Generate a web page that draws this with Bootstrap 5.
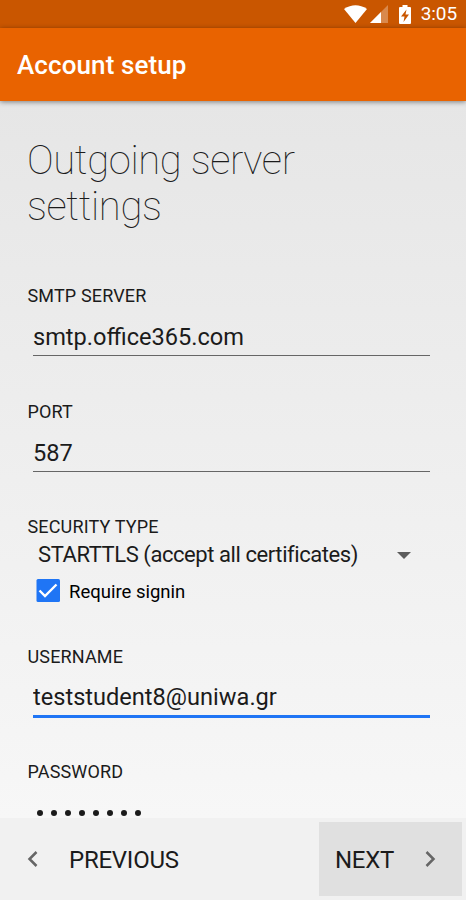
<!DOCTYPE html>
<html lang="en">
<head>
<meta charset="utf-8">
<meta name="viewport" content="width=device-width, initial-scale=1">
<title>Account setup</title>
<link href="https://cdn.jsdelivr.net/npm/bootstrap@5.3.0/dist/css/bootstrap.min.css" rel="stylesheet">
<style>
body{font-family:Roboto,sans-serif;color:#1b1b1b;height:900px;background:linear-gradient(#e6e6e6 100px,#f7f7f7 818px)}
.status-bar{height:28px;background:#c95600;padding-right:9px}
.status-time{font-size:19px;line-height:28px;margin-left:9px;letter-spacing:-.1px}
.app-bar{height:73px;background:#e96300;box-shadow:0 1px 5px rgba(0,0,0,.45);padding-left:17px}
.app-title{font-size:26px;font-weight:500;line-height:75px;letter-spacing:.1px}
.setup-form{padding:37px 36px 0 27px}
.page-title{font-size:40px;font-weight:100;line-height:46px;margin-bottom:54px;letter-spacing:-.35px}
.field-label{font-size:18px;line-height:24px;height:24px;letter-spacing:.15px;padding-left:.5px}
.field{height:115.5px}
.field .form-control{font-family:inherit;font-size:23.6px;line-height:28px;height:43px;margin:5px 0 0 6px;width:397px;color:#1b1b1b;padding:9px 0 3px;border-bottom:1.5px solid #666!important}
.field .form-control.is-active{height:44px;border-bottom:3px solid #1f75f5!important}
.security{height:129.5px}
.security-select{font-size:22px;line-height:28px;margin:2px 0 0 11px;width:373px}
.security-select span{letter-spacing:-.43px}
.signin{margin:9px 0 0 9px;gap:9px;height:26px}
.signin-text{font-size:18.5px;line-height:26px;color:#000;padding-top:1px}
.dots{gap:8.1px;margin:26px 0 0 9.5px}
.dots span{width:6px;height:6px;border-radius:50%;background:#1b1b1b}
.bottom-bar{height:82px;background:#f1f1f1;padding:4px 4px 4px 0}
.nav-btn{font-size:24px;height:74px;color:#1b1b1b;letter-spacing:-.25px}
.nav-btn span{padding-top:2px}
.prev-btn{padding:0 0 0 27px;gap:31px}
.next-btn{width:143px;background:#e0e0e0;padding:0 26px 0 16px}
</style>
</head>
<body class="d-flex flex-column overflow-hidden">
<div class="status-bar d-flex align-items-center justify-content-end text-white flex-shrink-0">
<svg width="23" height="19" viewBox="0 0 23 19" fill="#fff"><path d="M0 4Q11.500-3.500 23 4L11.500 18Z"/></svg>
<svg width="18" height="18" viewBox="0 0 18 18" fill="#fff" style="margin-left:3px"><path opacity=".3" d="M18 0V18H0Z"/><path d="M11 7V18H0Z"/></svg>
<svg width="12" height="19" viewBox="0 0 12 19" style="margin-left:11px;margin-right:1px"><path fill="#fff" d="M3.500 0h5v2H11q1 0 1 1V18q0 1-1 1H1q-1 0-1-1V3q0-1 1-1h2.500Z"/><path fill="#c95600" d="M7.500 4.500 2 11.500h3.500L4.500 17 10 9.500H6.500Z"/></svg>
<span class="status-time">3:05</span>
</div>
<header class="app-bar text-white flex-shrink-0"><div class="app-title">Account setup</div></header>
<main class="setup-form flex-grow-1 overflow-hidden">
<h1 class="page-title">Outgoing server<br>settings</h1>
<div class="field"><label class="field-label d-block" for="smtp">SMTP SERVER</label><input id="smtp" class="form-control border-0 rounded-0 bg-transparent shadow-none" value="smtp.office365.com"></div>
<div class="field"><label class="field-label d-block" for="port">PORT</label><input id="port" class="form-control border-0 rounded-0 bg-transparent shadow-none" value="587"></div>
<div class="security">
<div class="field-label">SECURITY TYPE</div>
<div class="security-select d-flex align-items-center justify-content-between"><span>STARTTLS (accept all certificates)</span><svg width="14" height="7" viewBox="0 0 14 7"><path fill="#5c5c5c" d="M0 0H14L7 7Z"/></svg></div>
<div class="signin d-flex align-items-center"><svg width="24" height="24" viewBox="0 0 24 24"><rect x=".5" width="23.500" height="23" rx="1.500" fill="#1f75f5"/><path d="M3.500 11.500 9 17 20.500 5.500" fill="none" stroke="#fff" stroke-width="2.400"/></svg><span class="signin-text">Require signin</span></div>
</div>
<div class="field"><label class="field-label d-block" for="user">USERNAME</label><input id="user" class="form-control is-active border-0 rounded-0 bg-transparent shadow-none" value="teststudent8@uniwa.gr"></div>
<div><div class="field-label">PASSWORD</div><div class="dots d-flex"><span></span><span></span><span></span><span></span><span></span><span></span><span></span><span></span></div></div>
</main>
<footer class="bottom-bar d-flex justify-content-between flex-shrink-0">
<button class="nav-btn prev-btn btn border-0 rounded-0 d-flex align-items-center"><svg width="11" height="16" viewBox="0 0 11 16"><path d="M9.500 1 2.500 8 9.500 15" fill="none" stroke="#666" stroke-width="2.500"/></svg><span>PREVIOUS</span></button>
<button class="nav-btn next-btn btn border-0 rounded-0 d-flex align-items-center justify-content-between"><span>NEXT</span><svg width="11" height="16" viewBox="0 0 11 16"><path d="M1.500 1 8.500 8 1.500 15" fill="none" stroke="#666" stroke-width="2.500"/></svg></button>
</footer>
<script src="https://cdn.jsdelivr.net/npm/bootstrap@5.3.0/dist/js/bootstrap.bundle.min.js"></script>
</body>
</html>
